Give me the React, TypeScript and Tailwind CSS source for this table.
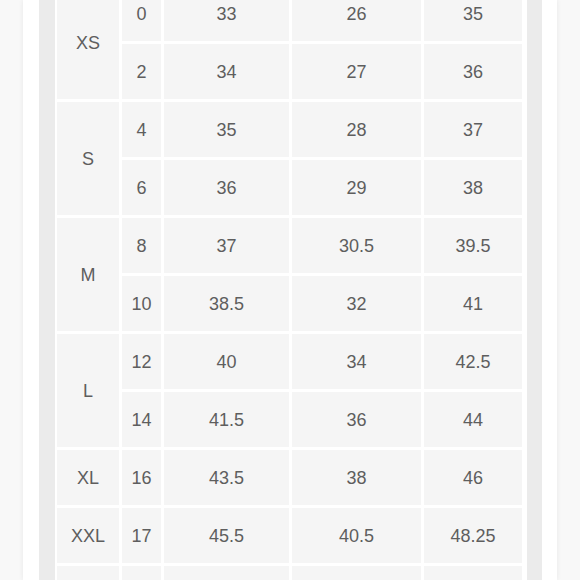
import React from "react";

// Size chart rows: size label spans its numeric sizes
interface SizeGroup {
  label: string;
  rows: [string, string, string, string][];
}

const groups: SizeGroup[] = [
  { label: "XS", rows: [["0", "33", "26", "35"], ["2", "34", "27", "36"]] },
  { label: "S", rows: [["4", "35", "28", "37"], ["6", "36", "29", "38"]] },
  { label: "M", rows: [["8", "37", "30.5", "39.5"], ["10", "38.5", "32", "41"]] },
  { label: "L", rows: [["12", "40", "34", "42.5"], ["14", "41.5", "36", "44"]] },
  { label: "XL", rows: [["16", "43.5", "38", "46"]] },
  { label: "XXL", rows: [["17", "45.5", "40.5", "48.25"]] },
  { label: "", rows: [["", "", "", ""]] },
];

const cell = "bg-[#f5f5f5] flex items-center justify-center pt-[2px]";

const App: React.FC = () => {
  let rowIndex = 1;
  return (
    <div
      className="w-[580px] h-[580px] overflow-hidden bg-[#f8f8f8] flex justify-center text-[18px] text-[#5e5e5e]"
      style={{ fontFamily: '"Liberation Sans", Arial, sans-serif' }}
    >
      <div className="w-[534px] h-full bg-white flex shadow-[0_0_5px_rgba(0,0,0,0.07)] pl-[16px] pr-[15px]">
        <div className="flex-1 h-full bg-white border-l-[16px] border-r-[15px] border-[#ebebeb] pl-[2px] pr-[4px]">
          <div className="grid grid-cols-[62px_39px_125px_129px_98px] auto-rows-[55px] gap-[3px] mt-[-14px]">
            {groups.map((g) => {
              const start = rowIndex;
              rowIndex += g.rows.length;
              return (
                <React.Fragment key={start}>
                  <div
                    className={cell}
                    style={{ gridRow: `${start} / span ${g.rows.length}`, gridColumn: 1 }}
                  >
                    {g.label}
                  </div>
                  {g.rows.map((r, i) =>
                    r.map((v, j) => (
                      <div
                        key={`${i}-${j}`}
                        className={cell}
                        style={{ gridRow: start + i, gridColumn: j + 2 }}
                      >
                        {v}
                      </div>
                    ))
                  )}
                </React.Fragment>
              );
            })}
          </div>
        </div>
      </div>
    </div>
  );
};

export default App;
